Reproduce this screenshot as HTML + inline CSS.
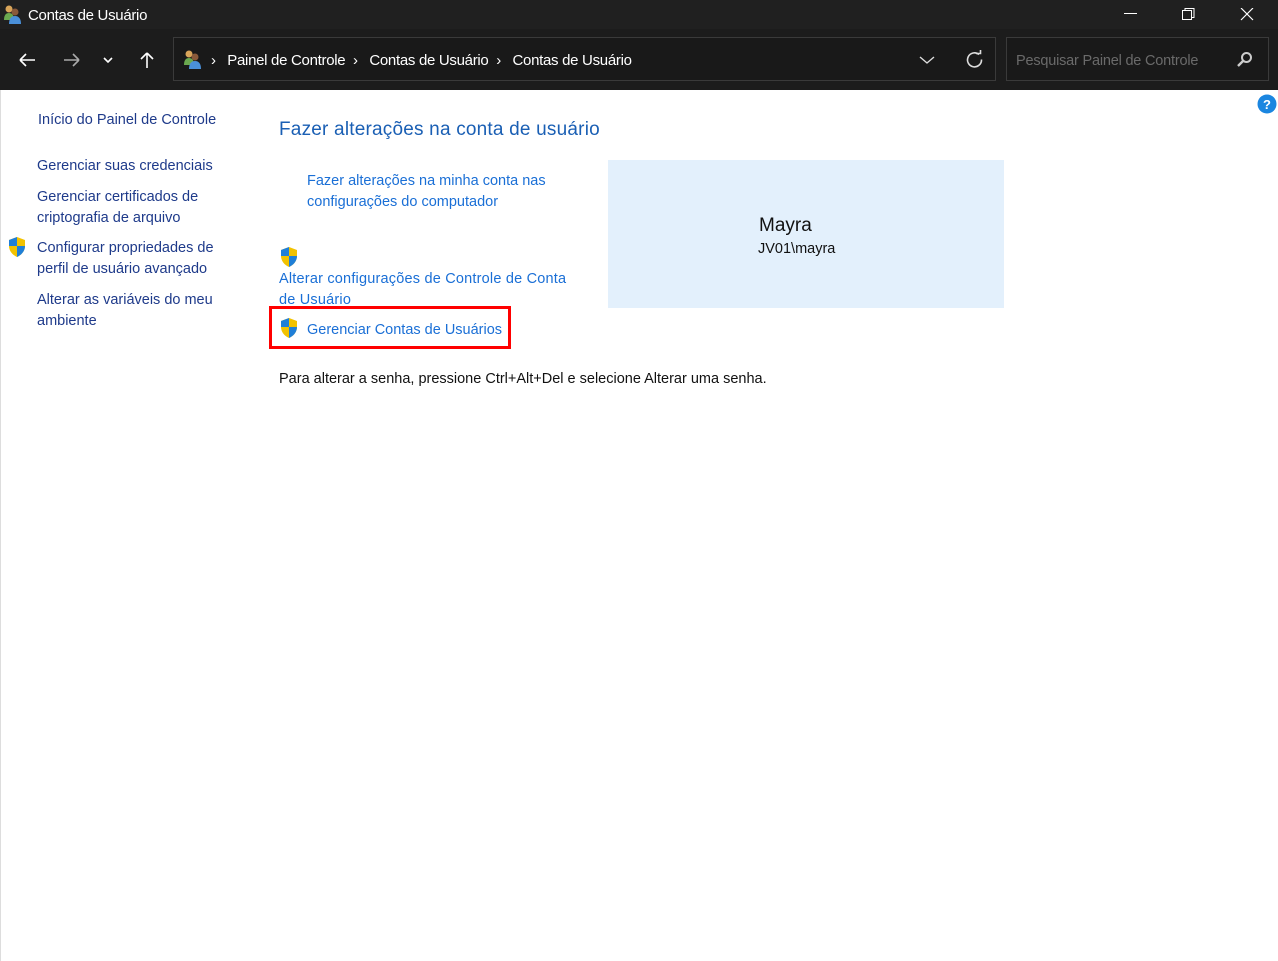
<!DOCTYPE html>
<html><head><meta charset="utf-8"><style>
*{margin:0;padding:0;box-sizing:border-box}
body{width:1278px;height:961px;background:#fff;font-family:"Liberation Sans",sans-serif;position:relative;overflow:hidden}
.abs{position:absolute;white-space:nowrap}
.tb{position:absolute;left:0;top:0;width:1278px;height:29px;background:#202020}
.nb{position:absolute;left:0;top:29px;width:1278px;height:61px;background:#1c1c1c}
.addr{position:absolute;left:173px;top:37px;width:823px;height:44px;border:1px solid #3a3a3a;background:#191919}
.srch{position:absolute;left:1006px;top:37px;width:263px;height:44px;border:1px solid #3a3a3a;background:#191919}
.w{color:#fff;font-size:15px}
.lt{color:#1e3a8a;font-size:14.5px;line-height:21px;letter-spacing:0}
.bl{color:#1a6fd6;font-size:14.5px;line-height:21px;letter-spacing:0}
.leftborder{position:absolute;left:0;top:90px;width:1px;height:871px;background:#ddd}
</style></head><body>
<div class="tb"></div>
<div class="nb"></div>
<svg class="abs" style="left:3px;top:4px" width="20" height="20" viewBox="0 0 20 20"><circle cx="6" cy="5" r="3.5" fill="#d9a55a"/><path d="M1 16c0-5 2-7 5-7s5 2 5 7z" fill="#6aa84f"/><circle cx="12" cy="8" r="3.5" fill="#8a5a3a"/><path d="M6 20c0-5 2-8 6-8s6 3 6 8z" fill="#4a90d9"/></svg>
<div class="abs w" style="left:28px;top:7px;font-size:15px;letter-spacing:-0.3px">Contas de Usuário</div>
<svg class="abs" style="left:1124px;top:8px" width="140" height="14"><line x1="0" y1="5.5" x2="13" y2="5.5" stroke="#fff"/><rect x="58.5" y="2.5" width="9" height="9" fill="none" stroke="#fff"/><path d="M61 2.5V0.5h9v9h-2" fill="none" stroke="#fff"/><path d="M117 0l12 12M129 0l-12 12" stroke="#fff" stroke-width="1.2"/></svg>
<svg class="abs" style="left:18px;top:51px" width="145" height="18"><path d="M2 9h15M2 9l6-6M2 9l6 6" stroke="#fff" stroke-width="1.6" fill="none"/><path d="M46 9h15M61 9l-6-6M61 9l-6 6" stroke="#aaa" stroke-width="1.6" fill="none"/><path d="M86 7l4 4 4-4" stroke="#fff" stroke-width="1.6" fill="none"/><path d="M129 17V2M129 2l-6 6M129 2l6 6" stroke="#fff" stroke-width="1.6" fill="none"/></svg>
<div class="addr"></div>
<svg class="abs" style="left:183px;top:49px" width="20" height="20" viewBox="0 0 20 20"><circle cx="6" cy="5" r="3.5" fill="#d9a55a"/><path d="M1 16c0-5 2-7 5-7s5 2 5 7z" fill="#6aa84f"/><circle cx="12" cy="8" r="3.5" fill="#8a5a3a"/><path d="M6 20c0-5 2-8 6-8s6 3 6 8z" fill="#4a90d9"/></svg>
<div class="abs w" style="left:211px;top:52px;letter-spacing:-0.3px">›&nbsp;&nbsp; Painel de Controle &nbsp;›&nbsp;&nbsp; Contas de Usuário &nbsp;›&nbsp;&nbsp; Contas de Usuário</div>
<svg class="abs" style="left:918px;top:50px" width="70" height="20"><path d="M2 7l7 6 7-6" stroke="#ddd" stroke-width="1.4" fill="none"/><path d="M61 4.5a7 7 0 1 0 2.5 5" stroke="#ddd" stroke-width="1.6" fill="none"/><path d="M58 3.5h4.5v-4" stroke="#ddd" stroke-width="1.6" fill="none"/></svg>
<div class="srch"></div>
<div class="abs" style="left:1016px;top:53px;color:#6a6a6a;font-size:14.5px;letter-spacing:-0.2px">Pesquisar Painel de Controle</div>
<svg class="abs" style="left:1237px;top:51px" width="16" height="16"><circle cx="9.5" cy="6.5" r="4.5" stroke="#ccc" stroke-width="2" fill="none"/><path d="M6 10l-5 5" stroke="#ccc" stroke-width="2.4"/></svg>
<div class="leftborder"></div>
<svg class="abs" style="left:1257px;top:94px" width="20" height="20"><circle cx="10" cy="10" r="9.5" fill="#1b86e0"/><text x="10" y="15" font-size="13" fill="#fff" text-anchor="middle" font-family="Liberation Sans" font-weight="bold">?</text></svg>

<div class="abs lt" style="left:38px;top:110px">Início do Painel de Controle</div>
<div class="abs lt" style="left:37px;top:156px">Gerenciar suas credenciais</div>
<div class="abs lt" style="left:37px;top:187px">Gerenciar certificados de<br>criptografia de arquivo</div>
<svg class="abs" style="left:8px;top:237px" width="18" height="20" viewBox="0 0 18 20"><path d="M9 0L1 3v6c0 5 3.5 9 8 11 4.5-2 8-6 8-11V3z" fill="#f2c200"/><path d="M9 0L1 3v6h8z" fill="#1f7fd8"/><path d="M9 9h8c0 5-3.5 9-8 11z" fill="#1f7fd8"/></svg>
<div class="abs lt" style="left:37px;top:238px">Configurar propriedades de<br>perfil de usuário avançado</div>
<div class="abs lt" style="left:37px;top:290px">Alterar as variáveis do meu<br>ambiente</div>

<div class="abs" style="left:279px;top:119px;color:#1a5fb4;font-size:19px;letter-spacing:0.2px">Fazer alterações na conta de usuário</div>
<div class="abs bl" style="left:307px;top:171px">Fazer alterações na minha conta nas<br>configurações do computador</div>
<svg class="abs" style="left:280px;top:247px" width="18" height="20" viewBox="0 0 18 20"><path d="M9 0L1 3v6c0 5 3.5 9 8 11 4.5-2 8-6 8-11V3z" fill="#f2c200"/><path d="M9 0L1 3v6h8z" fill="#1f7fd8"/><path d="M9 9h8c0 5-3.5 9-8 11z" fill="#1f7fd8"/></svg>
<div class="abs bl" style="left:279px;top:269px;letter-spacing:0.2px">Alterar configurações de Controle de Conta<br>de Usuário</div>
<div class="abs" style="left:269px;top:306px;width:242px;height:43px;border:3px solid #f00"></div>
<svg class="abs" style="left:280px;top:318px" width="18" height="20" viewBox="0 0 18 20"><path d="M9 0L1 3v6c0 5 3.5 9 8 11 4.5-2 8-6 8-11V3z" fill="#f2c200"/><path d="M9 0L1 3v6h8z" fill="#1f7fd8"/><path d="M9 9h8c0 5-3.5 9-8 11z" fill="#1f7fd8"/></svg>
<div class="abs bl" style="left:307px;top:320px">Gerenciar Contas de Usuários</div>
<div class="abs" style="left:279px;top:369px;color:#111;font-size:14.5px;line-height:21px;letter-spacing:0">Para alterar a senha, pressione Ctrl+Alt+Del e selecione Alterar uma senha.</div>

<div class="abs" style="left:608px;top:160px;width:396px;height:148px;background:#e3f0fc"></div>
<div class="abs" style="left:759px;top:215px;color:#111;font-size:19px">Mayra</div>
<div class="abs" style="left:758px;top:241px;color:#111;font-size:14.5px">JV01\mayra</div>
</body></html>
